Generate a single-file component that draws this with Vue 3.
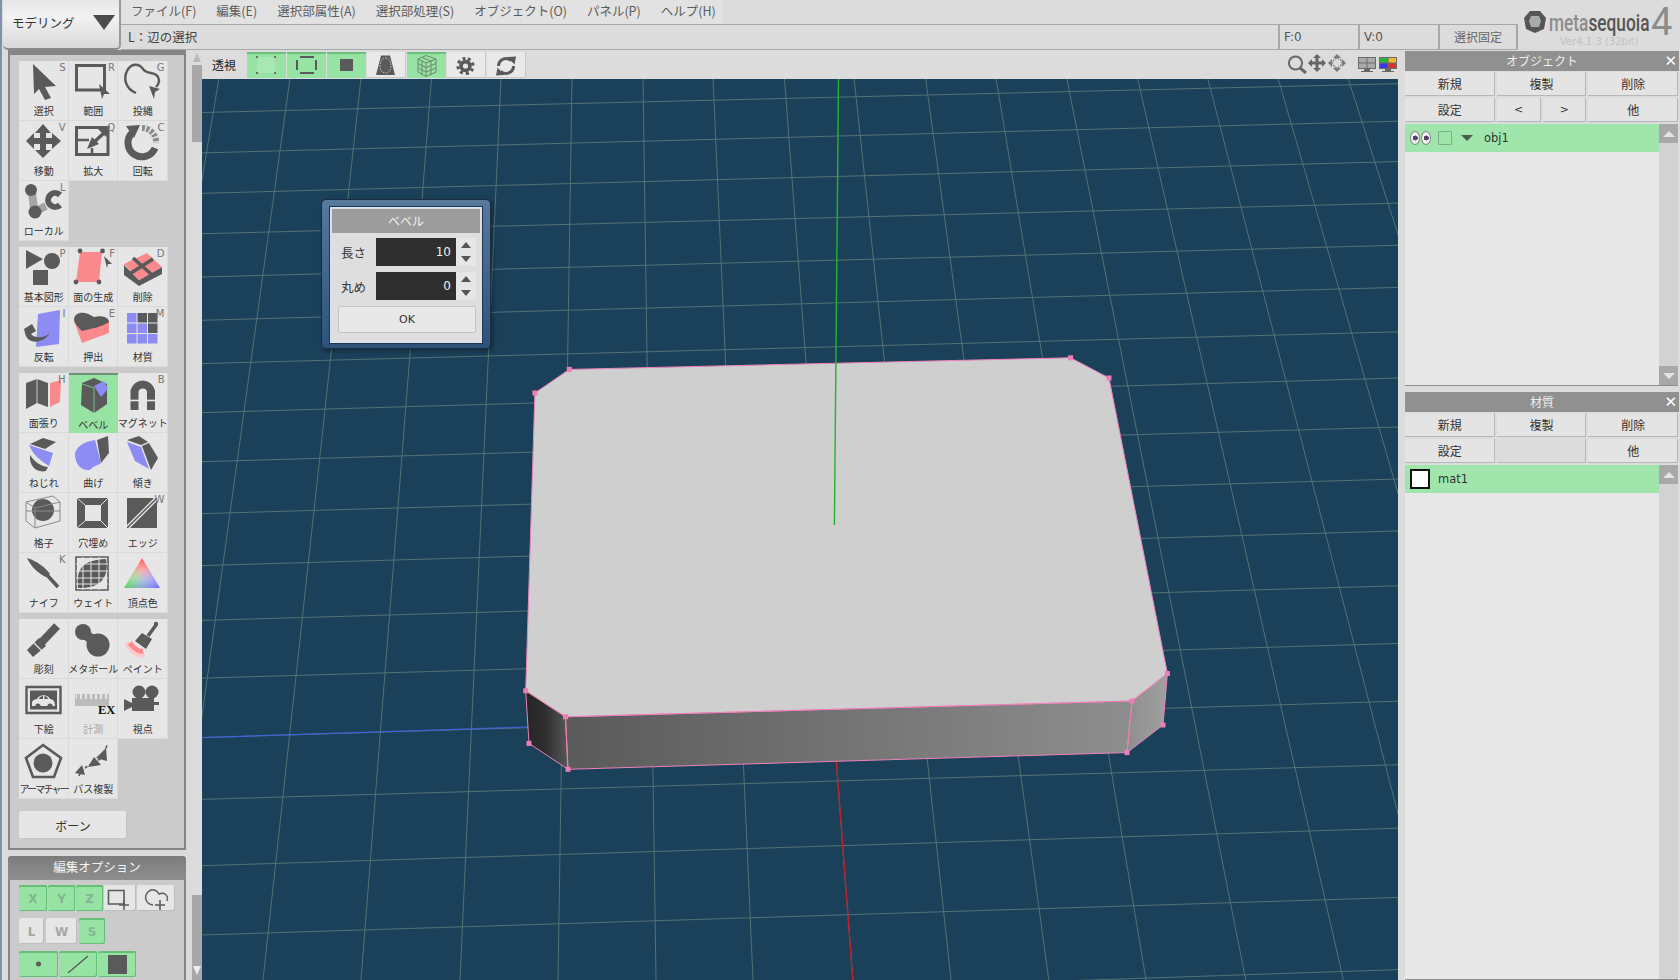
<template>
  <div class="app">
    <header class="topbar">
      <button class="mode-btn">
        <span>モデリング</span>
        <i class="mode-arrow"></i>
      </button>
      <div class="top-center">
        <nav class="menu">
          <span v-for="m in menus" :key="m">{{ m }}</span>
        </nav>
        <div class="status">
          <span class="status-text">L：辺の選択</span>
          <span class="status-cell">F:0</span>
          <span class="status-cell">V:0</span>
          <span class="status-cell status-btn">選択固定</span>
        </div>
      </div>
      <div class="logo">
        <svg class="logo-mark" width="24" height="24" viewBox="0 0 24 24">
          <path d="M7 1H17L23 8 21 19 12 23 3 19 1 8Z" fill="#555" />
          <path d="M8 6H16L18 11 16 17H8L6 11Z" fill="#aaa" />
        </svg>
        <span class="logo-name"><b class="logo-meta">meta</b><b class="logo-seq">sequoia</b></span>
        <span class="logo-four">4</span>
        <span class="logo-ver">Ver4.1.3 (32bit)</span>
      </div>
    </header>

    <div class="body">
      <aside class="sidebar">
        <div class="side-main">
          <section class="tools-panel">
            <div v-for="(group, gi) in toolGroups" :key="gi" class="tool-group">
              <div
                v-for="t in group"
                :key="t.label"
                class="tool"
                :class="{ active: t.active, disabled: t.disabled }"
              >
                <ShapeIcon :list="t.icon" :w="50" :h="42" />
                <span class="tool-label" :class="{ narrow: t.narrow }">{{ t.label }}</span>
                <span v-if="t.key" class="tool-key">{{ t.key }}</span>
              </div>
            </div>
            <button class="bone-btn">ボーン</button>
          </section>
          <div class="edit-head">編集オプション</div>
          <section class="edit-panel">
            <div v-for="(row, ri) in editRows" :key="ri" class="edit-row">
              <div
                v-for="(b, bi) in row"
                :key="bi"
                class="edit-btn"
                :class="{ on: b.on }"
                :style="{ width: b.w + 'px' }"
              >
                <ShapeIcon v-if="b.icon" :list="b.icon" :w="b.w" :h="26" />
                <span v-else>{{ b.text }}</span>
              </div>
            </div>
          </section>
        </div>
        <div class="side-scroll">
          <div class="sc-top"><i class="tri-up"></i></div>
          <div class="sc-thumb"></div>
          <div class="sc-space"></div>
          <div class="sc-bottom"><i class="tri-down"></i></div>
        </div>
      </aside>

      <main class="main">
        <div class="toolbar">
          <span class="view-label">透視</span>
          <div
            v-for="(b, i) in viewButtons"
            :key="i"
            class="view-btn"
            :class="{ on: b.on }"
          >
            <ShapeIcon :list="b.icon" :w="39" :h="26" />
          </div>
          <div class="view-right">
            <ShapeIcon v-for="(ic, i) in navIcons" :key="i" :list="ic" :w="20" :h="22" />
            <div class="monitors">
              <ShapeIcon :list="monitorGray" :w="20" :h="22" />
              <ShapeIcon :list="monitorColor" :w="20" :h="22" />
            </div>
          </div>
        </div>

        <div class="viewport">
          <svg class="scene" width="1196" height="901" viewBox="202 79 1196 901">
            <defs>
              <linearGradient id="leftFace" x1="0" y1="0" x2="1" y2="0">
                <stop offset="0" stop-color="#262626" />
                <stop offset="0.45" stop-color="#2e2e2e" />
                <stop offset="1" stop-color="#585858" />
              </linearGradient>
              <linearGradient id="frontFace" x1="0" y1="0" x2="1" y2="0">
                <stop offset="0" stop-color="#5a5a5a" />
                <stop offset="1" stop-color="#8e8e8e" />
              </linearGradient>
              <linearGradient id="rightFace" x1="0" y1="0" x2="1" y2="0">
                <stop offset="0" stop-color="#8e8e8e" />
                <stop offset="1" stop-color="#a0a0a0" />
              </linearGradient>
              <linearGradient id="vcRed" x1="0.5" y1="0" x2="0.5" y2="0.8">
                <stop offset="0" stop-color="#ff5a5a" />
                <stop offset="1" stop-color="#ff5a5a" stop-opacity="0" />
              </linearGradient>
              <linearGradient id="vcGreen" x1="0" y1="1" x2="0.6" y2="0.5">
                <stop offset="0" stop-color="#4fd05a" />
                <stop offset="1" stop-color="#4fd05a" stop-opacity="0" />
              </linearGradient>
              <linearGradient id="vcBlue" x1="1" y1="1" x2="0.4" y2="0.5">
                <stop offset="0" stop-color="#6a6af8" />
                <stop offset="1" stop-color="#6a6af8" stop-opacity="0" />
              </linearGradient>
            </defs>
            <line
              v-for="(l, i) in gridLines"
              :key="i"
              :x1="l[0]"
              :y1="l[1]"
              :x2="l[2]"
              :y2="l[3]"
              stroke="#5a7678"
              stroke-width="0.9"
            />
            <line x1="202" y1="737.6" x2="530" y2="727" stroke="#3f63d6" stroke-width="1.2" />
            <line x1="836.4" y1="762" x2="852.8" y2="980" stroke="#c21f2c" stroke-width="1.4" />
            <polygon :points="faces.left" fill="url(#leftFace)" />
            <polygon :points="faces.front" fill="url(#frontFace)" />
            <polygon :points="faces.right" fill="url(#rightFace)" />
            <polygon :points="faces.top" fill="#cfcfcf" />
            <g stroke="#ee82b8" stroke-width="1" fill="none">
              <polygon :points="faces.top" />
              <polygon :points="faces.left" />
              <polygon :points="faces.front" />
              <polygon :points="faces.right" />
            </g>
            <rect
              v-for="(v, i) in vertices"
              :key="i"
              :x="v[0] - 2.5"
              :y="v[1] - 2.5"
              width="5"
              height="5"
              fill="#ee7fb2"
            />
            <line x1="838.5" y1="79" x2="834.4" y2="525" stroke="#22b52c" stroke-width="1.4" />
          </svg>

          <div class="dialog">
            <div class="dialog-inner">
              <div class="dialog-title">ベベル</div>
              <div v-for="f in dialogFields" :key="f.label" class="field">
                <span class="field-label">{{ f.label }}</span>
                <span class="field-input">{{ f.value }}</span>
                <span class="spin"><i class="tri-up dark"></i><i class="tri-down dark"></i></span>
              </div>
              <button class="ok-btn">OK</button>
            </div>
          </div>
        </div>
      </main>

      <aside class="right">
        <section class="rp obj">
          <div class="rp-head">オブジェクト<span class="rp-close">✕</span></div>
          <div class="rp-btns">
            <span>新規</span><span>複製</span><span>削除</span>
            <span>設定</span>
            <span class="split"><em>&lt;</em><em>&gt;</em></span>
            <span>他</span>
          </div>
          <div class="rp-list">
            <div class="list-main">
              <div class="list-row">
                <i class="eye"></i><i class="eye"></i>
                <i class="check"></i>
                <i class="row-tri"></i>
                <span class="obj-name">obj1</span>
              </div>
            </div>
            <div class="list-scroll">
              <div class="ls-btn"><i class="tri-up"></i></div>
              <div class="ls-space"></div>
              <div class="ls-btn"><i class="tri-down"></i></div>
            </div>
          </div>
        </section>
        <section class="rp mat">
          <div class="rp-head">材質<span class="rp-close">✕</span></div>
          <div class="rp-btns">
            <span>新規</span><span>複製</span><span>削除</span>
            <span>設定</span>
            <span class="blank"></span>
            <span>他</span>
          </div>
          <div class="rp-list">
            <div class="list-main">
              <div class="list-row mat-row">
                <i class="swatch"></i>
                <span class="mat-name">mat1</span>
              </div>
            </div>
            <div class="list-scroll">
              <div class="ls-btn"><i class="tri-up"></i></div>
              <div class="ls-space"></div>
            </div>
          </div>
        </section>
      </aside>
    </div>
  </div>
</template>

<script setup>
import { h } from 'vue';

const DARK = '#5a5a5a';
const PINK = '#fb8a8e';
const BLUE = '#8c8cf4';
const PALE = '#e6e6e6';

// 도형 헬퍼
const f = (d, fill = DARK) => ({ d, fill });
const s = (d, stroke = DARK, sw = 2, dash) => ({ d, fill: 'none', stroke, sw, dash });
const c = (x, y, r, fill = DARK) =>
  f(`M${x - r} ${y}a${r} ${r} 0 1 0 ${2 * r} 0a${r} ${r} 0 1 0 ${-2 * r} 0Z`, fill);

const ShapeIcon = (props) =>
  h(
    'svg',
    { width: props.w, height: props.h, viewBox: `0 0 ${props.w} ${props.h}`, style: 'display:block' },
    props.list.map((p, i) =>
      p.text
        ? h('text', { key: i, x: p.x, y: p.y, fill: p.fill, 'font-size': p.size, 'font-weight': 700, 'font-family': '"Liberation Serif", serif' }, p.text)
        : h('path', {
            key: i,
            d: p.d,
            fill: p.fill,
            stroke: p.stroke,
            'stroke-width': p.sw,
            'stroke-dasharray': p.dash,
            'stroke-linecap': p.cap,
          })
    )
  );
ShapeIcon.props = ['list', 'w', 'h'];

const menus = ['ファイル(F)', '編集(E)', '選択部属性(A)', '選択部処理(S)', 'オブジェクト(O)', 'パネル(P)', 'ヘルプ(H)'];

const materialGrid = [];
for (let r = 0; r < 3; r++) {
  for (let q = 0; q < 3; q++) {
    const dark = (r === 0 && q > 0) || (r === 1 && q === 2);
    const x = 9 + q * 10.5;
    const y = 6 + r * 10.5;
    materialGrid.push(f(`M${x} ${y}h9.5v9.5h-9.5Z`, dark ? DARK : BLUE));
  }
}

const toolGroups = [
  [
    { label: '選択', key: 'S', icon: [f('M14 3L37 25 26 26 32 37 26 39 20 28 15 33Z')] },
    {
      label: '範囲',
      key: 'R',
      icon: [s('M8.5 4.5H36.5V29H8.5Z', DARK, 3), f('M31 23L42 33 36 33 34 38Z')],
    },
    {
      label: '投縄',
      key: 'G',
      icon: [
        s('M18 32C8 28 5 18 9 10 13 2 21 2 25 8 29 14 37 10 40 16 42 20 40 24 38 26', DARK, 2.4),
        f('M31 25L42 28 37 31 36 38Z'),
      ],
    },
    {
      label: '移動',
      key: 'V',
      icon: [f('M24 3L32 12H27V17H33V12L42 20 33 28V23H27V29H32L24 37 16 29H21V23H15V28L7 20 15 12V17H21V12H16Z')],
    },
    {
      label: '拡大',
      key: 'Q',
      icon: [
        s('M8.5 6.5H40V33.5H8.5Z', DARK, 3),
        s('M8 19H21M24 27V34', DARK, 2.5),
        s('M23 24L37 11', DARK, 3.5),
        f('M19 28L24 16 31 23Z'),
        f('M42 5L30 8 38 16Z'),
      ],
    },
    {
      label: '回転',
      key: 'C',
      icon: [
        s('M14 12A14 14 0 1 0 37 27', DARK, 7),
        f('M8 5L22 4 16 17Z'),
        s('M24 7A14 14 0 0 1 38 22', '#8c8c8c', 6, '3 1.5'),
      ],
    },
    {
      label: 'ローカル',
      key: 'L',
      icon: [
        s('M13 11L15 28M17 30L27 25', '#a4a4a4', 8),
        c(12, 9, 6),
        c(16, 31, 6.5),
        s('M41 14A7 7 0 1 0 41 24', DARK, 6),
      ],
    },
  ],
  [
    {
      label: '基本図形',
      key: 'P',
      icon: [f('M7 3L24 12 7 22Z'), c(33, 14, 8), f('M14 23H29V38H14Z')],
    },
    {
      label: '面の生成',
      key: 'F',
      icon: [
        f('M12 5H34L31 35H8Z', PINK),
        c(12, 4, 2.4),
        c(34.5, 4, 2.4),
        c(31, 35, 2.4),
        c(8, 35, 2.4),
        f('M36 9L44 17 40 17 39 21Z'),
      ],
    },
    {
      label: '削除',
      key: 'D',
      icon: [
        f('M6 18L21 33V39L6 28ZM21 33L44 20V27L21 39Z'),
        f('M6 17L29 6 44 20 21 33Z', PINK),
        s('M15 11L33 27M35 12L13 26', DARK, 3.6),
      ],
    },
    {
      label: '反転',
      key: 'I',
      icon: [
        f('M19 7L41 3 40 37 17 40Z', BLUE),
        f('M6 26C8 38 24 37 31 26 26 31 16 32 12 27L17 24 13 17 5 22Z'),
      ],
    },
    {
      label: '押出',
      key: 'E',
      icon: [
        f('M6 14L14 36 41 26V14Z', PINK),
        f('M6 12C7 5 16 3 26 10 33 8 41 10 41 15 34 20 22 22 14 24 10 20 6 16 6 12Z'),
      ],
    },
    { label: '材質', key: 'M', icon: materialGrid },
  ],
  [
    {
      label: '面張り',
      key: 'H',
      icon: [f('M7 10L18 6 29 10V34L18 30 7 36Z'), s('M18 6V30', PALE, 0.8), f('M31 10L42 7 41 29 31 34Z', PINK)],
    },
    {
      label: 'ベベル',
      active: true,
      icon: [
        f('M14 10L26 5 39 11V31L26 40 13 32Z'),
        f('M26 13L36 8 40 16 33 24Z', BLUE),
        s('M14 11L26 15V40', '#97e3a4', 0.7),
      ],
    },
    {
      label: 'マグネット',
      key: 'B',
      icon: [
        s('M16.5 37V18A8.5 8.5 0 0 1 33 18V37', DARK, 8),
        s('M11 27.5H39', PALE, 1.6),
      ],
    },
    {
      label: 'ねじれ',
      icon: [
        f('M11 11L24 5 37 9 26 16Z'),
        f('M10 12L34 20 30 33C22 28 14 22 10 12Z', BLUE),
        f('M11 22C16 30 24 34 29 34L27 38C18 40 10 34 11 22Z'),
      ],
    },
    {
      label: '曲げ',
      icon: [
        f('M7 21C8 14 15 9 27 7L33 30C31 32 25 33 22 37 12 38 7 30 7 21Z', BLUE),
        f('M29 7L40 3 41 20 33 30Z'),
      ],
    },
    {
      label: '傾き',
      icon: [
        f('M9 7L21 3 30 9 23 12Z'),
        f('M9 9L23 14 31 36 17 28Z', BLUE),
        f('M24 13L31 10 40 25 33 37Z'),
      ],
    },
    {
      label: '格子',
      icon: [
        c(24, 17, 11),
        s('M7 9L34 3 41 9V28L16 35 7 28ZM7 9L16 15 41 9M16 15V35M7 18L41 18', '#8a8a8a', 1),
      ],
    },
    {
      label: '穴埋め',
      icon: [
        f('M9 5H40V35H9Z'),
        f('M17 12H33V28H17Z', PALE),
        s('M9 5L17 12M40 5L33 12M9 35L17 28M40 35L33 28', PALE, 1),
      ],
    },
    {
      label: 'エッジ',
      key: 'W',
      icon: [f('M9 5H39V35H9Z'), s('M9 33L38 4M11 35L40 6', '#f0f0f0', 1.2)],
    },
    {
      label: 'ナイフ',
      key: 'K',
      icon: [
        f('M8 5C18 8 27 15 31 21L27 24C20 21 12 14 8 5Z'),
        s('M28 22L39 34', DARK, 3.6),
      ],
    },
    {
      label: 'ウェイト',
      icon: [
        s('M8 4H40V37H8Z', DARK, 1.6),
        f('M10 35C8 16 14 7 38 6 42 26 30 36 10 35Z'),
        s('M8 11H40M8 18H40M8 25H40M8 31H40M15 4V37M23 4V37M31 4V37', PALE, 1),
      ],
    },
    {
      label: '頂点色',
      icon: [
        f('M24 5L42 35H6Z', '#ffffff'),
        f('M24 5L42 35H6Z', 'url(#vcRed)'),
        f('M24 5L42 35H6Z', 'url(#vcGreen)'),
        f('M24 5L42 35H6Z', 'url(#vcBlue)'),
      ],
    },
  ],
  [
    {
      label: '彫刻',
      icon: [
        s('M38 7L22 24', DARK, 8),
        f('M8 31L20 19 27 27 14 38Z'),
        s('M15 24L23 32', PALE, 1.2),
      ],
    },
    {
      label: 'メタボール',
      icon: [c(15, 13, 8), c(30, 26, 11.5), s('M15 13L30 26', DARK, 10)],
    },
    {
      label: 'ペイント',
      icon: [
        s('M38 6L30 17', DARK, 3.5),
        c(38, 5, 2.2),
        f('M24 14L34 20 28 30 17 22Z'),
        s('M10 23C14 31 21 36 26 34', '#ffc9c9', 8),
        s('M12 24C15 29 21 33 25 32', PINK, 5),
      ],
    },
    {
      label: '下絵',
      icon: [
        s('M7.5 8H41.5V34H7.5Z', DARK, 2.4),
        f('M11 11.5H38V30.5H11Z'),
        f('M13 27V23C14 21 16 20 18 20 20 15 29 15 31 20 34 20 36 22 36 27Z', PALE),
        f('M20 20C21 17 24 17 24 17V20ZM25.5 17C27 17 28.5 18 29 20H25.5Z', DARK),
        c(19, 27, 2.6),
        c(31, 27, 2.6),
      ],
    },
    {
      label: '計測',
      disabled: true,
      icon: [
        f('M7 15V27H41V15H39V20H37V15H34V20H32V15H29V20H27V15H24V20H22V15H19V20H17V15H14V20H12V15H9V20H8V15Z', '#bcbcbc'),
        { text: 'EX', x: 30, y: 35, size: 12.5, fill: '#111' },
      ],
    },
    {
      label: '視点',
      icon: [
        c(21, 13, 6.5),
        c(34, 13, 6.5),
        f('M14 19H36V32H14Z'),
        f('M6 20L14 24V28L6 32Z'),
        f('M36 23H41V26H36Z'),
      ],
    },
    {
      label: 'アーマチャー',
      narrow: true,
      icon: [s('M24 6L42 19 35 38H14L7 19Z', DARK, 2.6), c(24, 24, 9.5)],
    },
    {
      label: 'パス複製',
      icon: [
        s('M11 37C14 28 26 24 32 20 35 17 38 12 39 5', DARK, 1.6, '3 2'),
        f('M14 26L17 36 7 34Z'),
        f('M26 18L33 26 20 28Z'),
        f('M38 9L39 22 28 19Z'),
      ],
    },
  ],
];

const editRows = [
  [
    { text: 'X', on: true, w: 28 },
    { text: 'Y', on: true, w: 27 },
    { text: 'Z', on: true, w: 27 },
    {
      w: 32,
      icon: [
        s('M4.5 5.5H20V19H4.5Z', DARK, 1.6),
        s('M20 15V25M15 20H25', DARK, 1.6),
      ],
    },
    {
      w: 38,
      icon: [
        s('M16 20C8 19 7 11 11 7 15 3 20 5 22 9 27 7 32 10 30 16', DARK, 1.4),
        s('M23 15V25M18 20H28', DARK, 1.6),
      ],
    },
  ],
  [
    { text: 'L', w: 25 },
    { text: 'W', w: 31 },
    { text: 'S', on: true, w: 26 },
  ],
  [
    { on: true, w: 39, icon: [c(19.5, 13, 2.5)] },
    { on: true, w: 38, icon: [s('M9 22L29 5', DARK, 1.4)] },
    { on: true, w: 38, icon: [f('M10 4H29V23H10Z')] },
  ],
];

const cubeLines = 'M19 3.5L29 7V20L19 24.5 11 20V7ZM11 7L19 11 29 7M19 11V24.5M11 11.5L19 15.5 29 11.5M11 16L19 20 29 16M15 5.5L23.5 9M15 9V22.5M24 9V22.5';

const viewButtons = [
  {
    on: true,
    icon: [f('M10 5H28V21H10Z', '#a8e7b3'), c(10, 5, 1.1), c(28, 5, 1.1), c(10, 21, 1.1), c(28, 21, 1.1)],
  },
  { on: true, icon: [s('M13 5H27M13 21H27M10 8V18M29 8V18', DARK, 2)] },
  { on: true, icon: [f('M13 7H26V19H13Z')] },
  {
    icon: [
      f('M14 3.5H23L28 23H9Z'),
      s('M18.5 6C22 6 24 10 24 14 24 18 22 21 18.5 21 15 21 13 18 13 14 13 10 15 6 18.5 6Z', '#dddddd', 0.8, '1.5 1.2'),
    ],
  },
  { on: true, icon: [s(cubeLines, '#6d8a72', 1)] },
  {
    icon: [
      { d: 'M18.5 6.5a7.5 7.5 0 1 0 0.01 0Z', fill: 'none', stroke: DARK, sw: 3.2, dash: '3 2.9' },
      c(18.5, 14, 6.2),
      c(18.5, 14, 2.6, PALE),
    ],
  },
  {
    icon: [
      s('M11.5 14A7.5 7.5 0 0 1 24.3 8.7', DARK, 3),
      f('M20.5 5L29 4.5 27.5 12.5Z'),
      s('M26.5 14A7.5 7.5 0 0 1 13.7 19.3', DARK, 3),
      f('M17.5 23L9 23.5 10.5 15.5Z'),
    ],
  },
];

const navIcons = [
  [s('M8.5 4.5a6.5 6.5 0 1 0 0.01 0Z', '#6a6a6a', 2), s('M13 16L19 21', '#6a6a6a', 3)],
  [f('M10 2L14 6H11.5V9.5H15V7L19 11 15 15V12.5H11.5V16H14L10 20 6 16H8.5V12.5H5V15L1 11 5 7V9.5H8.5V6H6Z', '#666')],
  [
    f('M10 2L14 6H6ZM10 20L14 16H6ZM1 11L5 7V15ZM19 11L15 7V15Z', '#7a7a7a'),
    s('M10 6C14 7 15 9 15 11 14 14 12 15 10 16 7 15 6 13 5 11 6 9 7 7 10 6Z', '#8a8a8a', 1.5, '2 1'),
  ],
];

const monitorGray = [
  f('M1 5H19V17H1Z', '#6a6a6a'),
  f('M2 6H9.5V10.5H2ZM10.5 6H18V10.5H10.5ZM2 11.5H9.5V16H2ZM10.5 11.5H18V16H10.5Z', '#aaaaaa'),
  f('M7 17H13V19H16V20H4V19H7Z', '#666'),
];
const monitorColor = [
  f('M1 5H19V17H1Z', '#6a6a6a'),
  f('M2 6H9.5V10.5H2Z', '#2ab53c'),
  f('M10.5 6H18V10.5H10.5Z', '#f2b632'),
  f('M2 11.5H9.5V16H2Z', '#3a3ae0'),
  f('M10.5 11.5H18V16H10.5Z', '#d9342f'),
  f('M7 17H13V19H16V20H4V19H7Z', '#666'),
];

const dialogFields = [
  { label: '長さ', value: '10' },
  { label: '丸め', value: '0' },
];

// 줌 크롭 좌표에서 화면 좌표로 환산한 격자선
const toY = (py) => 75 + py / 1.7326;
const horizontal = [
  [65, 15], [135, 80], [205, 150], [275, 222], [350, 295], [425, 368], [500, 445],
  [585, 525], [670, 610], [760, 700], [850, 790], [945, 885], [1045, 985], [1148, 1085],
  [1255, 1195], [1370, 1305], [1490, 1425], [1620, 1550],
].map(([a, b]) => [202, toY(a), 1398, toY(b)]);
const vertical = [
  [219, 68], [290, 165.6], [361, 263], [431.5, 361], [501, 460], [572, 558], [643, 656],
  [713, 753], [784.4, 852.9], [854, 951], [925.5, 1048.8], [996, 1146], [1066.7, 1245.8],
  [1137.5, 1343.4], [1207.6, 1441], [1278, 1538.6], [1348, 1636],
].map(([a, b]) => [a, 78, b, 980]);
const gridLines = [...horizontal, ...vertical];

const A = [569.3, 369.4];
const B = [534.9, 393];
const C = [525.7, 690.8];
const E = [565.5, 716.8];
const G = [1132, 701];
const H = [1167.4, 673.5];
const I = [1109, 378];
const J = [1070.6, 357.8];
const K = [529, 743.4];
const M = [568, 769.3];
const N = [1127, 752.6];
const O = [1163, 725];
const pts = (...list) => list.map((p) => p.join(',')).join(' ');
const faces = {
  top: pts(A, B, C, E, G, H, I, J),
  left: pts(C, E, M, K),
  front: pts(E, G, N, M),
  right: pts(G, H, O, N),
};
const vertices = [A, B, C, E, G, H, I, J, K, M, N, O];
</script>

<style>
html,
body {
  margin: 0;
  background: #dcdcdc;
}
</style>

<style scoped>
.app {
  width: 1680px;
  height: 980px;
  overflow: hidden;
  display: flex;
  flex-direction: column;
  background: #dcdcdc;
  border-left: 2px solid #8292aa;
  box-sizing: border-box;
  font-family: "Noto Sans CJK JP", "Noto Sans", sans-serif;
  color: #333;
  font-size: 12.5px;
}

.topbar {
  height: 50px;
  display: flex;
  flex: none;
}

.mode-btn {
  width: 118px;
  margin-left: 1px;
  height: 50px;
  border: 0;
  border-right: 2px solid #9a9a9a;
  border-bottom: 2px solid #8a8a8a;
  border-radius: 0 0 5px 5px;
  background: linear-gradient(#e6e6e6, #f2f2f2 35%, #d9d9d9);
  display: flex;
  align-items: center;
  justify-content: space-between;
  padding: 0 4px 4px 9px;
  box-sizing: border-box;
  font: inherit;
  font-size: 12.5px;
  color: #333;
}

.mode-arrow {
  width: 0;
  height: 0;
  border-left: 11px solid transparent;
  border-right: 11px solid transparent;
  border-top: 15px solid #4c4c4c;
}

.top-center {
  width: 1397px;
  display: flex;
  flex-direction: column;
}

.menu {
  height: 25px;
  box-sizing: border-box;
  border-bottom: 1px solid #a8a8a8;
  display: flex;
  align-items: center;
  gap: 20px;
  padding: 0 0 4px 10px;
  color: #5c5c5c;
  background: linear-gradient(90deg, #e2e2e2 602px, #dcdcdc 602px);
}

.status {
  height: 25px;
  box-sizing: border-box;
  border-bottom: 1px solid #a8a8a8;
  display: flex;
  align-items: center;
}

.status-text {
  flex: 1;
  padding: 0 0 1px 7px;
  color: #444;
}

.status-cell {
  width: 80px;
  height: 24px;
  box-sizing: border-box;
  border-left: 2px solid #a8a8a8;
  padding-left: 4px;
  line-height: 24px;
  font-size: 12px;
  color: #555;
  font-family: "DejaVu Sans", sans-serif;
}

.status-btn {
  border-right: 2px solid #a8a8a8;
  text-align: center;
  padding-left: 0;
  font-family: inherit;
  color: #666;
}

.logo {
  position: relative;
  flex: 1;
  background: #dcdcdc;
}

.logo-mark {
  position: absolute;
  left: 5px;
  top: 10px;
}

.logo-name {
  position: absolute;
  left: 31px;
  top: 8px;
  font-family: Roboto, sans-serif;
  font-size: 24px;
  line-height: 30px;
  white-space: nowrap;
  transform: scaleX(0.72);
  transform-origin: left center;
}

.logo-name b {
  font-weight: 500;
}

.logo-meta {
  color: #8c8c8c;
}

.logo-seq {
  color: #555;
}

.logo-four {
  position: absolute;
  left: 133px;
  top: 0;
  font-family: Roboto, sans-serif;
  font-size: 38px;
  line-height: 44px;
  color: #8c8c8c;
}

.logo-ver {
  position: absolute;
  left: 42px;
  top: 36px;
  font-family: "DejaVu Sans", sans-serif;
  font-size: 10px;
  color: #c2c2c2;
  white-space: nowrap;
}

.body {
  flex: 1;
  display: flex;
  min-height: 0;
}

.sidebar {
  width: 200px;
  flex: none;
  display: flex;
  padding-left: 6px;
  box-sizing: border-box;
  gap: 6px;
}

.side-main {
  width: 178px;
  display: flex;
  flex-direction: column;
}

.tools-panel {
  height: 800px;
  box-sizing: border-box;
  border: 2px solid #858585;
  border-top-width: 5px;
  background: #cbcbcb;
  padding: 6px 0 0 9px;
}

.tool-group {
  display: grid;
  grid-template-columns: repeat(3, 49.5px);
  grid-auto-rows: 60px;
  margin-bottom: 6px;
}

.tool {
  position: relative;
  background: #e6e6e6;
  box-shadow: inset -1px -1px 0 #dadada;
  display: flex;
  flex-direction: column;
  align-items: center;
  color: #333;
}

.tool.active {
  background: #97e3a4;
  box-shadow: inset 0 2px 0 #70907a;
}

.tool.disabled .tool-label {
  color: #a8a8a8;
}

.tool-label {
  font-size: 10px;
  line-height: 16px;
  white-space: nowrap;
}

.tool-label.narrow {
  letter-spacing: -1.8px;
}

.tool.active .tool-label {
  margin-top: 2px;
}

.tool-key {
  position: absolute;
  right: 3px;
  top: 1px;
  font-family: "DejaVu Sans", sans-serif;
  font-size: 10px;
  color: #777;
}

.bone-btn {
  display: block;
  width: 108px;
  height: 28px;
  margin-top: 12px;
  border: 0;
  border-radius: 2px;
  background: #e6e6e6;
  box-shadow: inset -1px -1px 0 #c4c4c4;
  font: inherit;
  font-size: 12px;
  color: #333;
}

.edit-head {
  margin-top: 6px;
  height: 24px;
  background: linear-gradient(#7c7c7c, #8e8e8e);
  border-radius: 3px 3px 0 0;
  color: #f4f4f4;
  font-size: 12.5px;
  line-height: 21px;
  text-align: center;
}

.edit-panel {
  flex: 1;
  background: #cbcbcb;
  border: 2px solid #858585;
  border-width: 0 2px;
  padding: 5px 0 0 9px;
  display: flex;
  flex-direction: column;
  gap: 7px;
}

.edit-row {
  display: flex;
  gap: 1px;
}

.edit-row:nth-child(2) {
  gap: 2px;
}

.edit-btn {
  height: 26px;
  background: #e6e6e6;
  border-radius: 2px;
  box-shadow: inset -1px -1px 0 #bdbdbd;
  display: flex;
  align-items: center;
  justify-content: center;
  font-family: "DejaVu Sans", sans-serif;
  font-weight: 700;
  font-size: 12px;
  color: #a6a6a6;
}

.edit-btn > span {
  padding-top: 2px;
}

.edit-btn.on {
  background: #97e3a4;
  box-shadow: inset 0 2px 0 #66bf78, inset -1px -1px 0 #66bf78;
  color: #82b592;
}

.side-scroll {
  width: 10px;
  display: flex;
  flex-direction: column;
  background: #dcdcdc;
}

.sc-top {
  height: 15px;
  display: flex;
  justify-content: center;
  align-items: center;
}

.sc-thumb {
  height: 77px;
  background: #a8a8a8;
}

.sc-space {
  height: 753px;
}

.sc-bottom {
  flex: 1;
  background: #a8a8a8;
  display: flex;
  align-items: flex-end;
  justify-content: center;
  padding-bottom: 5px;
}

.tri-up,
.tri-down {
  width: 0;
  height: 0;
  border-left: 4px solid transparent;
  border-right: 4px solid transparent;
  display: block;
}

.tri-up {
  border-bottom: 9px solid #eeeeee;
}

.tri-down {
  border-top: 9px solid #eeeeee;
}

.sc-top .tri-up {
  border-bottom-color: #b8b8b8;
}

.main {
  width: 1196px;
  flex: none;
  display: flex;
  flex-direction: column;
}

.toolbar {
  height: 29px;
  flex: none;
  box-sizing: border-box;
  padding-top: 2px;
  display: flex;
}

.view-label {
  width: 45px;
  box-sizing: border-box;
  padding-left: 10px;
  font-size: 12px;
  line-height: 25px;
  color: #222;
}

.view-btn {
  width: 39px;
  height: 26px;
  margin-right: 1px;
  background: #e9e9e9;
  box-shadow: inset -1px -1px 0 #c8c8c8;
}

.view-btn.on {
  background: #97e3a4;
  box-shadow: inset 0 2px 0 #6cc07e;
}

.view-right {
  margin-left: auto;
  display: flex;
  gap: 0;
}

.monitors {
  display: flex;
  margin-left: 10px;
  gap: 1px;
}

.viewport {
  position: relative;
  flex: 1;
  background: #1b4059;
  overflow: hidden;
}

.scene {
  display: block;
}

.dialog {
  position: absolute;
  left: 119px;
  top: 120px;
  width: 170px;
  height: 150px;
  box-sizing: border-box;
  padding: 7px 8px;
  border-radius: 5px;
  background: linear-gradient(#56799c, #2d527a);
  border: 1px solid #1a2c40;
  box-shadow: 2px 2px 4px rgba(0, 0, 0, 0.35);
}

.dialog-inner {
  height: 136px;
  box-sizing: border-box;
  border: 1px solid #d4e4f0;
  outline: 1px solid #1d3550;
  background: #dedede;
  padding: 1px;
}

.dialog-title {
  height: 24px;
  background: #9c9c9c;
  color: #f2f2f2;
  font-size: 12px;
  line-height: 23px;
  text-align: center;
  margin-bottom: 5px;
}

.field {
  display: flex;
  height: 28px;
  margin-bottom: 6px;
  padding-left: 9px;
  align-items: center;
}

.field-label {
  width: 35px;
  font-size: 12.5px;
}

.field-input {
  width: 80px;
  height: 28px;
  box-sizing: border-box;
  background: #2f2f2f;
  color: #f0f0f0;
  text-align: right;
  padding-right: 5px;
  font-family: "DejaVu Sans", sans-serif;
  font-size: 12px;
  line-height: 28px;
}

.spin {
  width: 20px;
  height: 28px;
  background: #e6e6e6;
  display: flex;
  flex-direction: column;
  align-items: center;
  justify-content: space-around;
}

.tri-up.dark {
  border-left-width: 5px;
  border-right-width: 5px;
  border-bottom: 6px solid #555;
}

.tri-down.dark {
  border-left-width: 5px;
  border-right-width: 5px;
  border-top: 6px solid #555;
}

.ok-btn {
  display: block;
  width: 138px;
  height: 27px;
  margin: 0 0 0 6px;
  border: 1px solid #c4c4c4;
  border-radius: 2px;
  background: #e8e8e8;
  font-family: "DejaVu Sans", sans-serif;
  font-size: 11px;
  color: #333;
}

.right {
  flex: 1;
  padding: 1px 2px 0 7px;
  display: flex;
  flex-direction: column;
  gap: 6px;
}

.rp {
  display: flex;
  flex-direction: column;
}

.obj {
  height: 335px;
}

.mat {
  flex: 1;
  min-height: 0;
}

.rp-head {
  position: relative;
  height: 20px;
  flex: none;
  margin-right: -1px;
  background: #909090;
  color: #eeeeee;
  font-size: 12px;
  line-height: 20px;
  text-align: center;
}

.rp-close {
  position: absolute;
  right: 2px;
  top: 0;
  font-size: 15px;
  font-weight: 700;
  color: #fff;
  font-family: "DejaVu Sans", sans-serif;
}

.rp-btns {
  flex: none;
  display: grid;
  grid-template-columns: repeat(3, 1fr);
  gap: 2px;
  margin: 1px 0 2px;
}

.rp-btns > span {
  height: 24px;
  line-height: 24px;
  text-align: center;
  background: #e4e4e4;
  box-shadow: inset -1px -1px 0 #b8b8b8;
  font-size: 12px;
}

.rp-btns > .split {
  display: flex;
  gap: 2px;
  background: none;
  box-shadow: none;
}

.split em {
  flex: 1;
  font-style: normal;
  background: #e4e4e4;
  box-shadow: inset -1px -1px 0 #b8b8b8;
  font-family: "DejaVu Sans", sans-serif;
  font-size: 11px;
}

.rp-btns > .blank {
  background: #dcdcdc;
}

.rp-list {
  flex: 1;
  min-height: 0;
  display: flex;
  background: #e8e8e8;
  border-bottom: 1px solid #8c8c8c;
}

.list-main {
  flex: 1;
}

.list-row {
  height: 28px;
  background: #a0e6ac;
  display: flex;
  align-items: center;
  padding-left: 5px;
}

.eye {
  width: 10px;
  height: 14px;
  border-radius: 50%;
  background: radial-gradient(circle at 55% 50%, #55406a 0 2.4px, #f0f0f0 2.6px);
  border: 1px solid #8a8a8a;
  box-sizing: border-box;
  margin-right: 1px;
}

.check {
  width: 14px;
  height: 14px;
  border: 1px solid #7fae8a;
  margin: 0 9px 0 6px;
  box-sizing: border-box;
  border-radius: 1px;
}

.row-tri {
  width: 0;
  height: 0;
  border-left: 6px solid transparent;
  border-right: 6px solid transparent;
  border-top: 6px solid #4c5c50;
  margin-right: 11px;
}

.obj-name,
.mat-name {
  font-family: "DejaVu Sans", sans-serif;
  font-size: 11.5px;
  color: #333;
}

.mat-row {
  padding-left: 5px;
}

.swatch {
  width: 20px;
  height: 20px;
  box-sizing: border-box;
  border: 2px solid #111;
  background: #fff;
  margin-right: 8px;
}

.list-scroll {
  width: 19px;
  display: flex;
  flex-direction: column;
  background: #d2d2d2;
}

.ls-btn {
  height: 19px;
  background: #a8a8a8;
  display: flex;
  align-items: center;
  justify-content: center;
}

.ls-btn .tri-up {
  border-left-width: 6px;
  border-right-width: 6px;
  border-bottom-width: 6px;
  border-bottom-color: #e4e4e4;
}

.ls-btn .tri-down {
  border-left-width: 6px;
  border-right-width: 6px;
  border-top-width: 6px;
  border-top-color: #e4e4e4;
}

.ls-space {
  flex: 1;
}
</style>
